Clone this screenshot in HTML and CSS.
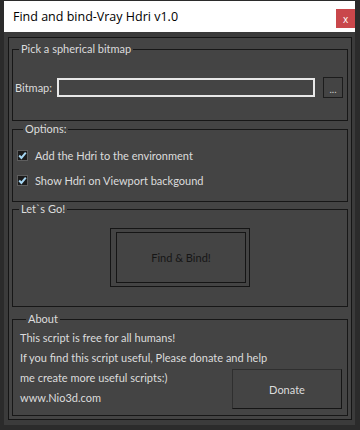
FILE: index.html
```html
<!DOCTYPE html>
<html lang="en">
<head>
    <meta charset="UTF-8">
    <meta name="viewport" content="width=device-width, initial-scale=1.0">
    <title>Find and bind-Vray Hdri v1.0</title>
    <link rel="stylesheet" href="styles.css">
</head>
<body>
    <div class="window">
        <div class="titlebar">
            <span class="title">Find and bind-Vray Hdri v1.0</span>
            <button class="btn_close">x</button>
        </div>

        <div class="client">
            <div class="rollout">
                <fieldset class="group group_bitmap">
                    <legend>Pick a spherical bitmap</legend>
                    <div class="row_bitmap">
                        <label for="bitmap">Bitmap:</label>
                        <input type="text" id="bitmap">
                        <button class="btn_browse">...</button>
                    </div>
                </fieldset>

                <fieldset class="group group_options">
                    <legend>Options:</legend>
                    <label class="check">
                        <svg class="box" width="11" height="11" viewBox="0 0 11 11">
                            <rect x="0.5" y="0.5" width="10" height="10" fill="#1b1b1b" stroke="#5e5e5e"/>
                            <path d="M2.2 5.5 L4.4 7.9 L8.8 2.6" fill="none" stroke="#a6d6f2" stroke-width="2"/>
                        </svg>
                        Add the Hdri to the environment
                    </label>
                    <label class="check">
                        <svg class="box" width="11" height="11" viewBox="0 0 11 11">
                            <rect x="0.5" y="0.5" width="10" height="10" fill="#1b1b1b" stroke="#5e5e5e"/>
                            <path d="M2.2 5.5 L4.4 7.9 L8.8 2.6" fill="none" stroke="#a6d6f2" stroke-width="2"/>
                        </svg>
                        Show Hdri on Viewport backgound
                    </label>
                </fieldset>

                <fieldset class="group group_go">
                    <legend>Let`s Go!</legend>
                    <button class="btn_find"><span>Find &amp; Bind!</span></button>
                </fieldset>

                <fieldset class="group group_about">
                    <legend>About</legend>
                    <p>This script is free for all humans!</p>
                    <p>If you find this script useful, Please donate and help</p>
                    <div class="about_bottom">
                        <div>
                            <p>me create more useful scripts:)</p>
                            <p>www.Nio3d.com</p>
                        </div>
                        <button class="btn_donate">Donate</button>
                    </div>
                </fieldset>
            </div>
        </div>
    </div>
</body>
</html>
```

FILE: styles.css
```css
* {
    margin: 0;
    padding: 0;
    box-sizing: border-box;
}

body {
    background-color: #2b2b2b;
    color: #dcdcdc;
    font-family: 'Lato', sans-serif;
    font-size: 11px;
}

.window {
    width: 360px;
    height: 430px;
    padding: 1px 5px 5px 4px;
    display: flex;
    flex-direction: column;
}

.titlebar {
    height: 31px;
    background-color: #fff;
    display: flex;
    justify-content: space-between;
    align-items: center;
    padding-left: 9px;
}

.title {
    color: #000;
    font-family: 'Open Sans', sans-serif;
    font-size: 12.5px;
}

.btn_close {
    align-self: flex-start;
    margin-top: 8px;
    width: 19px;
    height: 19px;
    background-color: #c9474b;
    border: none;
    color: #fff;
    font: 10px 'Open Sans', sans-serif;
}

.client {
    flex: 1;
    background-color: #3b3b3b;
    padding: 5px 3px 5px 4px;
}

.rollout {
    height: 100%;
    border: 1px solid #151515;
    background-color: #444;
    padding: 4px 3px 0 3px;
    display: flex;
    flex-direction: column;
}

.group {
    border: 1px solid #171717;
    min-width: 0;
}

.group legend {
    margin-left: 6px;
    padding: 0 2px;
    line-height: 14px;
}

/* bitmap */
.group_bitmap {
    padding-bottom: 23px;
}

.row_bitmap {
    display: flex;
    align-items: center;
    height: 20px;
    margin-top: 21px;
    padding-left: 2px;
}

.row_bitmap label {
    width: 42px;
}

.row_bitmap input {
    width: 258px;
    height: 19px;
    border: 2px solid #e8e8e8;
    background-color: #444;
    outline: none;
}

.btn_browse {
    width: 20px;
    height: 21px;
    margin-left: 8px;
    background-color: #444;
    border: 1px solid #1c1c1c;
    color: #cfcfcf;
    font: 10px 'Lato', sans-serif;
    padding-top: 3px;
}

/* options */
.group_options {
    margin-top: 1px;
    padding: 4px 0 11px 4px;
}

.check {
    display: flex;
    align-items: center;
    height: 20px;
    margin-top: 5px;
}

.check .box {
    margin-right: 7px;
}

/* let's go */
.group_go {
    padding-bottom: 19px;
}

.btn_find {
    display: block;
    width: 140px;
    height: 59px;
    margin: 12px auto 0;
    background-color: #444;
    border: 1px solid #151515;
    padding: 3px 3px 3px 5px;
    font: 11px 'Lato', sans-serif;
    color: #161616;
}

.btn_find span {
    display: flex;
    justify-content: center;
    align-items: center;
    height: 100%;
    border: 1px solid #151515;
}

/* about */
.group_about {
    margin-top: 5px;
    padding: 2px 5px 6px 7px;
}

.group_about p {
    line-height: 20px;
}

.about_bottom {
    display: flex;
    justify-content: space-between;
}

.btn_donate {
    width: 110px;
    height: 40px;
    margin-top: 1px;
    background-color: #444;
    border: 1px solid #151515;
    border-top-color: #2f2f2f;
    border-left-color: #2f2f2f;
    color: #dcdcdc;
    font: 11px 'Lato', sans-serif;
}
```
